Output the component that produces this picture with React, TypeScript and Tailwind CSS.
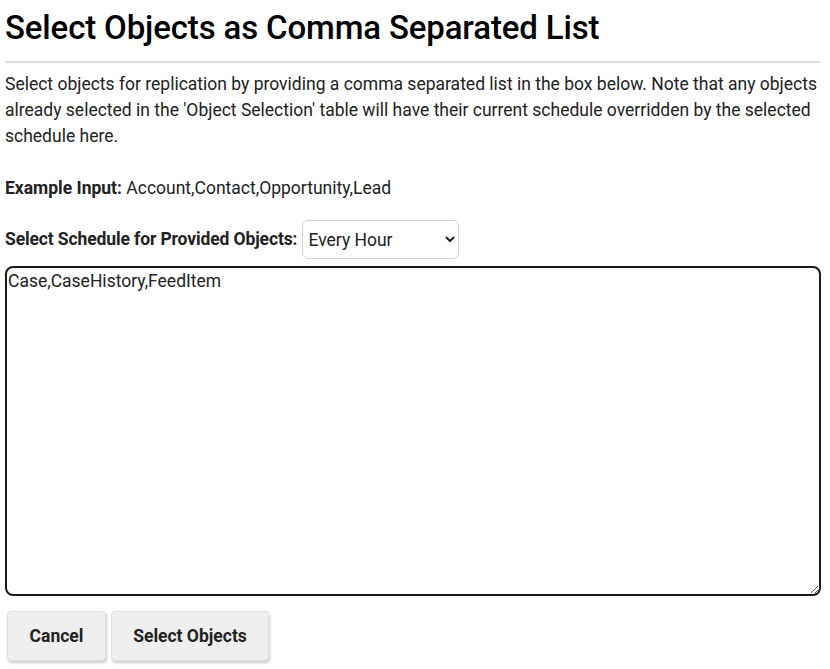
import React from "react";

export default function App() {
  return (
    <div className="bg-white text-black px-[5px] pt-[6px] w-[830px] min-h-[669px]" style={{ fontFamily: "Roboto, 'Liberation Sans', sans-serif" }}>
      <h1 className="text-[33px] leading-[44px] font-medium tracking-[-0.15px] text-black">Select Objects as Comma Separated List</h1>
      <hr className="mt-[11px] border-t-2 border-[#dcdcdc] mr-[5px]" />
      <p className="mt-[8px] text-[17.5px] leading-[26px] text-[#222]">
        Select objects for replication by providing a comma separated list in the box below. Note that any objects already selected in the 'Object Selection' table will have their current schedule overridden by the selected schedule here.
      </p>
      <p className="mt-[26px] text-[17.5px] leading-[26px] text-[#222]">
        <span className="font-bold">Example Input:</span> Account,Contact,Opportunity,Lead
      </p>
      <div className="mt-[19px] flex items-center gap-[5px]">
        <label className="text-[17.5px] font-bold tracking-[-0.12px] text-[#222]">Select Schedule for Provided Objects:</label>
        <select defaultValue="hour" className="w-[157px] h-[39px] rounded-[6px] border border-[#d4d4d4] bg-white pl-[1px] pr-[4px] text-[17.5px] text-[#222]" style={{ fontFamily: "Roboto, sans-serif" }}>
          <option value="hour">Every Hour</option>
          <option value="day">Every Day</option>
        </select>
      </div>
      <textarea
        defaultValue="Case,CaseHistory,FeedItem"
        className="mt-[7px] block w-[816px] h-[330px] rounded-[8px] border-2 border-[#1a1a1a] px-[1px] py-[2px] text-[17.5px] leading-[22px] text-[#222] outline-none"
        style={{ fontFamily: "Roboto, sans-serif" }}
      />
      <div className="mt-[15px] flex gap-[5px] pl-[2px]">
        <button className="w-[99px] h-[50px] rounded-[4px] border border-[#dedede] bg-[#efefef] text-[17.5px] font-bold text-[#222] shadow-[1px_2px_3px_rgba(0,0,0,0.2)]">Cancel</button>
        <button className="w-[158px] h-[50px] rounded-[4px] border border-[#dedede] bg-[#efefef] text-[17.5px] font-bold text-[#222] shadow-[1px_2px_3px_rgba(0,0,0,0.2)]">Select Objects</button>
      </div>
    </div>
  );
}
